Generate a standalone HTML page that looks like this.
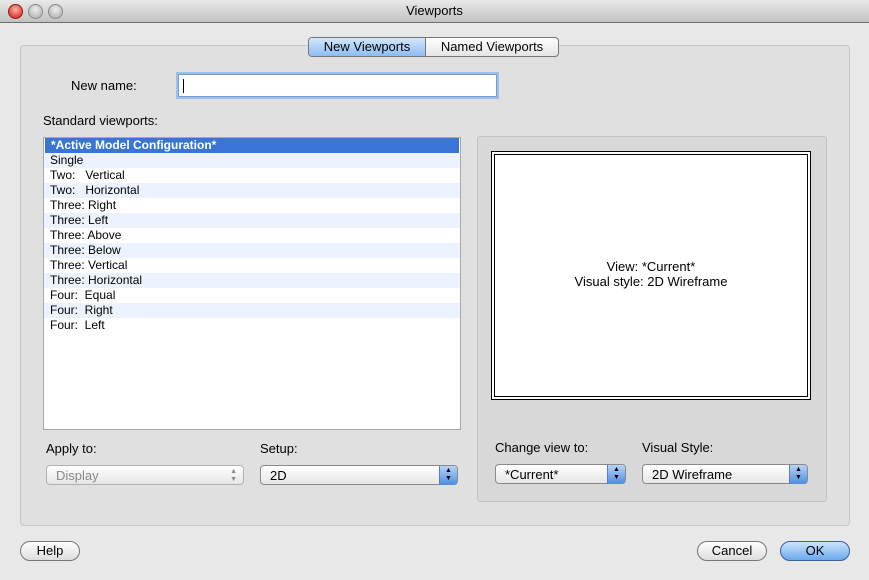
<!DOCTYPE html><html><head><style>
body{margin:0;width:869px;height:580px;background:#e8e8e8;font-family:"Liberation Sans",sans-serif;font-size:12px;color:#000;position:relative;overflow:hidden}
.a{position:absolute}
.title{left:0;top:0;width:869px;height:22px;background:linear-gradient(#e9e9e9,#c2c2c2);border-bottom:1px solid #6e6e6e;text-align:center;line-height:22px;font-size:13px}
.dot{top:4px;width:13px;height:13px;border-radius:50%;background:radial-gradient(circle at 50% 35%,#eee,#a8a8a8);border:1px solid #888}
.grp{left:20px;top:45px;width:828px;height:479px;background:#e0e0e0;border:1px solid #c6c6c6;border-radius:4px}
.btn{border:1px solid #777;border-radius:10px;background:linear-gradient(#fff,#ddd);text-align:center;height:18px;line-height:18px;font-size:13px}
.list{left:43px;top:137px;width:416px;height:291px;background:#fff;border:1px solid #a8a8a8}
.row{height:15px;line-height:15px;padding-left:6px;font-size:12px}
.row:nth-child(even){background:#edf3fe}
.pop{height:20px;border:1px solid #8a8a8a;border-radius:4px;background:linear-gradient(#fff,#e6e6e6);line-height:20px;font-size:13px;padding-left:9px;box-sizing:border-box}
.arr{position:absolute;right:0;top:0;width:17px;height:18px;background:linear-gradient(#b7d4f6,#4d8ce3);border-radius:0 3px 3px 0;border-left:1px solid #5a7fb7;font-size:7px;line-height:8px;text-align:center;padding-top:1px}
</style></head><body>
<div class="a title">Viewports</div>
<div class="a dot" style="left:8px;background:radial-gradient(circle at 50% 35%,#ffb0a8,#d0160c);border-color:#8a1a10"></div>
<div class="a dot" style="left:28px"></div>
<div class="a dot" style="left:48px"></div>
<div class="a grp"></div>
<div class="a" style="left:308px;top:37px;width:249px;height:18px;border:1px solid #777;border-radius:4px;background:linear-gradient(#fff,#e4e4e4);font-size:13px;line-height:18px">
<div class="a" style="left:0;top:0;width:116px;height:18px;background:linear-gradient(#d4e6fb,#8cbdf4);border-right:1px solid #777;border-radius:3px 0 0 3px;text-align:center">New Viewports</div>
<div class="a" style="left:117px;top:0;width:132px;text-align:center">Named Viewports</div></div>
<div class="a" style="left:71px;top:78px;font-size:13px">New name:</div>
<div class="a" style="left:178px;top:74px;width:317px;height:21px;background:#fff;border:1px solid #7a9cc8;box-shadow:0 0 0 2px #9cc0ec"><div class="a" style="left:4px;top:4px;width:1px;height:14px;background:#000"></div></div>
<div class="a" style="left:43px;top:113px;font-size:13px">Standard viewports:</div>
<div class="a list">
<div class="row" style="background:#3875d7;color:#fff;font-weight:bold;margin:0 1px">*Active Model Configuration*</div>
<div class="row">Single</div><div class="row">Two:&nbsp;&nbsp; Vertical</div><div class="row">Two:&nbsp;&nbsp; Horizontal</div><div class="row">Three: Right</div><div class="row">Three: Left</div><div class="row">Three: Above</div><div class="row">Three: Below</div><div class="row">Three: Vertical</div><div class="row">Three: Horizontal</div><div class="row">Four:&nbsp; Equal</div><div class="row">Four:&nbsp; Right</div><div class="row">Four:&nbsp; Left</div>
</div>
<div class="a" style="left:477px;top:136px;width:348px;height:364px;background:#d8d8d8;border:1px solid #c2c2c2;border-radius:3px"></div>
<div class="a" style="left:491px;top:151px;width:312px;height:241px;background:#fff;border:4px double #000;text-align:center;font-size:13px;line-height:15px"><div style="margin-top:104px">View: *Current*<br>Visual style: 2D Wireframe</div></div>
<div class="a" style="left:46px;top:441px;font-size:13px">Apply to:</div>
<div class="a" style="left:260px;top:441px;font-size:13px">Setup:</div>
<div class="a" style="left:495px;top:440px;font-size:13px">Change view to:</div>
<div class="a" style="left:642px;top:440px;font-size:13px">Visual Style:</div>
<div class="a pop" style="left:46px;top:465px;width:198px;color:#8a8a8a;border-color:#b0b0b0">Display<span style="position:absolute;right:6px;top:0;font-size:7px;line-height:8px;padding-top:2px">▲<br>▼</span></div>
<div class="a pop" style="left:260px;top:465px;width:198px">2D<div class="arr">▲<br>▼</div></div>
<div class="a pop" style="left:495px;top:464px;width:131px">*Current*<div class="arr">▲<br>▼</div></div>
<div class="a pop" style="left:642px;top:464px;width:166px">2D Wireframe<div class="arr">▲<br>▼</div></div>
<div class="a btn" style="left:20px;top:541px;width:58px">Help</div>
<div class="a btn" style="left:697px;top:541px;width:68px">Cancel</div>
<div class="a btn" style="left:780px;top:541px;width:68px;background:linear-gradient(#cfe4fb,#6aa8ee);border-color:#3a5f9a">OK</div>
</body></html>
